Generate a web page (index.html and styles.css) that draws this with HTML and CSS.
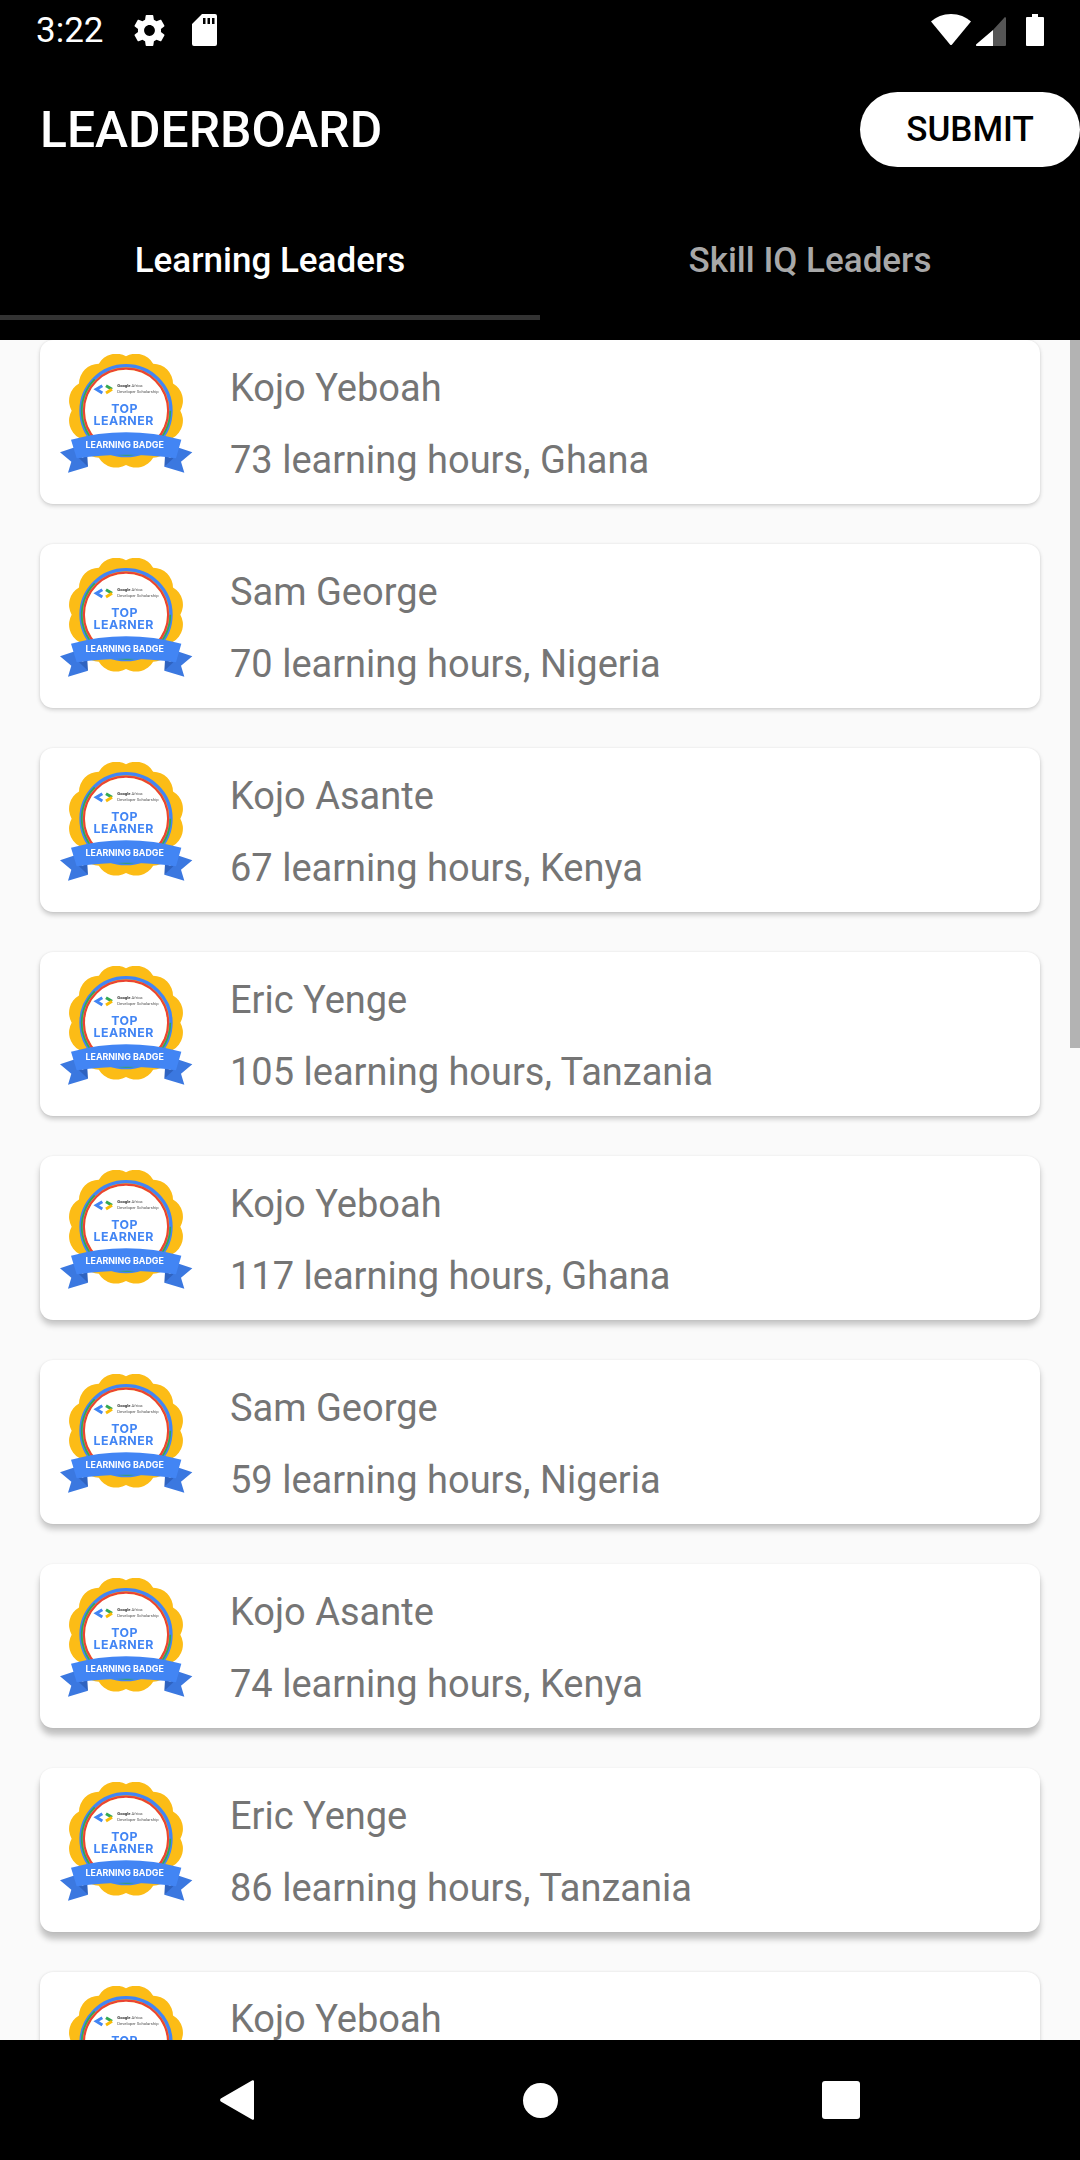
FILE: index.html
```html
<!DOCTYPE html>
<html lang="en">
<head>
<meta charset="utf-8">
<title>Leaderboard</title>
<link rel="stylesheet" href="styles.css">
</head>
<body>
<div class="app">
  <header class="top">
    <div class="status">
      <div class="status-left">
        <span class="time">3:22</span>
        <svg class="ic-gear" viewBox="0 0 24 24"><path d="M19.4 13c.04-.32.07-.65.07-1s-.03-.68-.07-1l2.11-1.65c.19-.15.24-.42.12-.64l-2-3.46c-.12-.22-.39-.3-.61-.22l-2.49 1c-.52-.4-1.08-.73-1.69-.98l-.38-2.65C14.46 2.18 14.25 2 14 2h-4c-.25 0-.46.18-.49.42l-.38 2.65c-.61.25-1.17.59-1.69.98l-2.49-1c-.23-.09-.49 0-.61.22l-2 3.46c-.13.22-.07.49.12.64L4.57 11c-.04.32-.07.66-.07 1s.03.68.07 1l-2.11 1.65c-.19.15-.24.42-.12.64l2 3.46c.12.22.39.3.61.22l2.49-1c.52.4 1.08.73 1.69.98l.38 2.65c.03.24.24.42.49.42h4c.25 0 .46-.18.49-.42l.38-2.65c.61-.25 1.17-.59 1.69-.98l2.49 1c.23.09.49 0 .61-.22l2-3.46c.12-.22.07-.49-.12-.64L19.4 13zM12 15.5c-1.93 0-3.5-1.57-3.5-3.5s1.57-3.5 3.5-3.5 3.5 1.57 3.5 3.5-1.57 3.5-3.5 3.5z"/></svg>
        <svg class="ic-sd" viewBox="0 0 25 32"><path fill-rule="evenodd" d="M10 0h13a2 2 0 0 1 2 2v28a2 2 0 0 1-2 2H2a2 2 0 0 1-2-2V10zM11 4v6h2.500V4zM15.500 4v6H18V4zM20 4v6h2.500V4z"/></svg>
      </div>
      <div class="status-right">
        <svg class="ic-wifi" viewBox="0 0 40 32"><path d="M0 7.500C5 3 12 0 20 0s15 3 20 7.500L21 30.500a1.300 1.300 0 0 1-2 0z"/></svg>
        <svg class="ic-signal" viewBox="0 0 30 31"><path class="sig-dim" d="M17 15L28 3a1 1 0 0 1 2 .5V30a1 1 0 0 1-1 1H17z"/><path d="M17 15V31H1a1 1 0 0 1-.7-1.700z"/></svg>
        <svg class="ic-batt" viewBox="0 0 18 32"><path d="M6 0h6v3h5a1 1 0 0 1 1 1v27a1 1 0 0 1-1 1H1a1 1 0 0 1-1-1V4a1 1 0 0 1 1-1h5z"/></svg>
      </div>
    </div>
    <div class="toolbar">
      <h1 class="title">LEADERBOARD</h1>
      <button class="submit">SUBMIT</button>
    </div>
    <div class="tabs">
      <div class="tab active">Learning Leaders</div>
      <div class="tab">Skill IQ Leaders</div>
    </div>
  </header>
  <main class="list">
    <article class="card">
      <svg class="badge" viewBox="90 55 405 360">
        <g id="badge-art">
          <path class="scallop" d="M451 225A60 60 0 0 1 429 306.500A60 60 0 0 1 369.500 366A60 60 0 0 1 288 388A60 60 0 0 1 206.500 366A60 60 0 0 1 147 306.500A60 60 0 0 1 125 225A60 60 0 0 1 147 143.500A60 60 0 0 1 206.500 84A60 60 0 0 1 288 62A60 60 0 0 1 369.500 84A60 60 0 0 1 429 143.500A60 60 0 0 1 451 225Z"/>
          <circle class="ring-blue" cx="288" cy="225" r="135"/>
          <path class="ring-green" d="M421 225A133 133 0 1 1 194 131"/>
          <circle class="ring-red" cx="288" cy="225" r="126"/>
          <circle class="ring-white" cx="288" cy="225" r="123"/>
          <path class="chev chev-blue" d="M217 150L199 161L217 172"/>
          <path class="chev chev-green" d="M228 150L246 161"/>
          <path class="chev chev-yellow" d="M246 161L228 172"/>
          <text class="bt-small" x="262" y="155"><tspan class="bt-strong">Google</tspan> Africa</text>
          <text class="bt-small" x="262" y="172">Developer Scholarship</text>
          <text class="bt-top" x="284" y="232">TOP</text>
          <text class="bt-top" x="281" y="267">LEARNER</text>
          <path class="rib-tail" d="M90 350L135 335L174 393L114 411L124 378Z"/>
          <path class="rib-tail" d="M487 350L442 335L403 393L463 411L453 378Z"/>
          <path class="rib-fold" d="M147 368L174 393L172 362Z"/>
          <path class="rib-fold" d="M430 368L403 393L405 362Z"/>
          <path class="rib-main" d="M123 312Q288 268 454 312L438 368Q288 346 140 368Z"/>
          <text class="bt-rib" x="284" y="338">LEARNING BADGE</text>
        </g>
      </svg>
      <div class="info"><p class="name">Kojo Yeboah</p><p class="meta">73 learning hours, Ghana</p></div>
    </article>
    <article class="card"><svg class="badge" viewBox="90 55 405 360"><use href="#badge-art"/></svg><div class="info"><p class="name">Sam George</p><p class="meta">70 learning hours, Nigeria</p></div></article>
    <article class="card"><svg class="badge" viewBox="90 55 405 360"><use href="#badge-art"/></svg><div class="info"><p class="name">Kojo Asante</p><p class="meta">67 learning hours, Kenya</p></div></article>
    <article class="card"><svg class="badge" viewBox="90 55 405 360"><use href="#badge-art"/></svg><div class="info"><p class="name">Eric Yenge</p><p class="meta">105 learning hours, Tanzania</p></div></article>
    <article class="card"><svg class="badge" viewBox="90 55 405 360"><use href="#badge-art"/></svg><div class="info"><p class="name">Kojo Yeboah</p><p class="meta">117 learning hours, Ghana</p></div></article>
    <article class="card"><svg class="badge" viewBox="90 55 405 360"><use href="#badge-art"/></svg><div class="info"><p class="name">Sam George</p><p class="meta">59 learning hours, Nigeria</p></div></article>
    <article class="card"><svg class="badge" viewBox="90 55 405 360"><use href="#badge-art"/></svg><div class="info"><p class="name">Kojo Asante</p><p class="meta">74 learning hours, Kenya</p></div></article>
    <article class="card"><svg class="badge" viewBox="90 55 405 360"><use href="#badge-art"/></svg><div class="info"><p class="name">Eric Yenge</p><p class="meta">86 learning hours, Tanzania</p></div></article>
    <article class="card"><svg class="badge" viewBox="90 55 405 360"><use href="#badge-art"/></svg><div class="info"><p class="name name-last">Kojo Yeboah</p></div></article>
    <div class="scrollbar"></div>
  </main>
  <nav class="navbar">
    <svg class="nav-back" viewBox="0 0 34 40"><path d="M32 .5a1.200 1.200 0 0 1 2 .8v37.400a1.200 1.200 0 0 1-2 .8L.800 21.500a2.200 2.200 0 0 1 0-3z"/></svg>
    <div class="nav-home"></div>
    <div class="nav-square"></div>
  </nav>
</div>
</body>
</html>
```

FILE: styles.css
```css
* { box-sizing: border-box; }
html, body { margin: 0; padding: 0; }
body { font-family: Roboto, "Noto Sans", sans-serif; background: #fafafa; }
.app { width: 1080px; height: 2160px; display: flex; flex-direction: column; overflow: hidden; }

.top { background: #000; color: #fff; height: 340px; flex: none; display: flex; flex-direction: column; }
.status { height: 60px; display: flex; justify-content: space-between; align-items: center; padding: 0 36px; }
.status-left, .status-right { display: flex; align-items: center; }
.time { font-size: 35px; width: 94.5px; }
.status svg { fill: #fff; display: block; }
.ic-gear { width: 37px; height: 37px; margin-right: 24.5px; }
.ic-sd { width: 25px; height: 32px; }
.ic-wifi { width: 40px; height: 32px; margin-right: 5px; }
.ic-signal { width: 30px; height: 31px; margin-right: 20px; }
.ic-batt { width: 18px; height: 32px; }
.status svg .sig-dim { fill: #555; }

.toolbar { height: 139px; display: flex; align-items: center; justify-content: space-between; padding-left: 40px; }
.title { margin: 3px 0 0; font-size: 49.8px; font-weight: 500; line-height: 1; }
.submit { width: 220px; height: 75px; border: 0; border-radius: 38px; background: #fff; color: #000; font: 500 35px Roboto, sans-serif; padding: 0; }

.tabs { flex: 1; display: flex; padding-bottom: 20px; }
.tab { width: 540px; display: flex; align-items: center; justify-content: center; font-size: 35px; font-weight: 500; color: #a8a8a8; padding-top: 6px; border-bottom: 5px solid transparent; }
.tab.active { color: #fff; border-bottom-color: #333; }

.list { flex: 1; min-height: 0; overflow: hidden; position: relative; padding: 0 40px; display: flex; flex-direction: column; gap: 40px; }
.card { flex: none; height: 164px; background: #fff; border-radius: 13px; display: flex; align-items: center; padding-left: 20px; box-shadow: 0 0 2px rgba(0,0,0,.08), 0 2px 4px rgba(0,0,0,.16); }
.card:nth-child(3), .card:nth-child(4) { box-shadow: 0 0 2px rgba(0,0,0,.08), 0 3px 5px rgba(0,0,0,.2); }
.card:nth-child(5), .card:nth-child(6) { box-shadow: 0 0 2px rgba(0,0,0,.08), 0 5px 6px rgba(0,0,0,.22); }
.card:nth-child(7), .card:nth-child(8) { box-shadow: 0 0 2px rgba(0,0,0,.08), 0 7px 6px rgba(0,0,0,.24); }
.badge { width: 135px; height: 120px; flex: none; margin: 0 35px 17px 0; filter: blur(.35px); }
.info { display: flex; flex-direction: column; gap: 30px; margin-top: 4px; }
.card:last-of-type .info { align-self: flex-start; margin-top: 0; padding-top: 28px; }
.name, .meta { margin: 0; font-size: 38px; line-height: 42px; color: #757575; }
.name.name-last { line-height: 38px; }

.scrollbar { position: absolute; top: 0; right: 0; width: 10px; height: 708px; background: #b3b3b3; }

.navbar { height: 120px; flex: none; background: #000; display: flex; align-items: center; padding-left: 220px; }
.nav-back { width: 34px; height: 40px; fill: #fff; display: block; margin-right: 269px; }
.nav-home { width: 35px; height: 35px; border-radius: 50%; background: #fff; margin-right: 264px; }
.nav-square { width: 38px; height: 38px; border-radius: 3px; background: #fff; }

.scallop { fill: #fcbc16; }
.ring-blue { fill: none; stroke: #4285f4; stroke-width: 10; }
.ring-green { fill: none; stroke: #34a853; stroke-width: 5; }
.ring-red { fill: none; stroke: #ea4335; stroke-width: 7; }
.ring-white { fill: #fff; }
.chev { fill: none; stroke-width: 9; }
.chev-blue { stroke: #4285f4; }
.chev-green { stroke: #34a853; }
.chev-yellow { stroke: #fbbc05; }
.bt-small { font: 400 12.500px Roboto, sans-serif; fill: #555; }
.bt-strong { font-weight: 700; fill: #333; }
.bt-top { font: 700 37px Inter, Roboto, sans-serif; letter-spacing: 1.500px; fill: #4285f4; text-anchor: middle; }
.bt-rib { font: 700 26.500px Inter, Roboto, sans-serif; fill: #fff; text-anchor: middle; }
.rib-main { fill: #4285f4; }
.rib-tail { fill: #3b78e0; }
.rib-fold { fill: #2f63c0; }
```
